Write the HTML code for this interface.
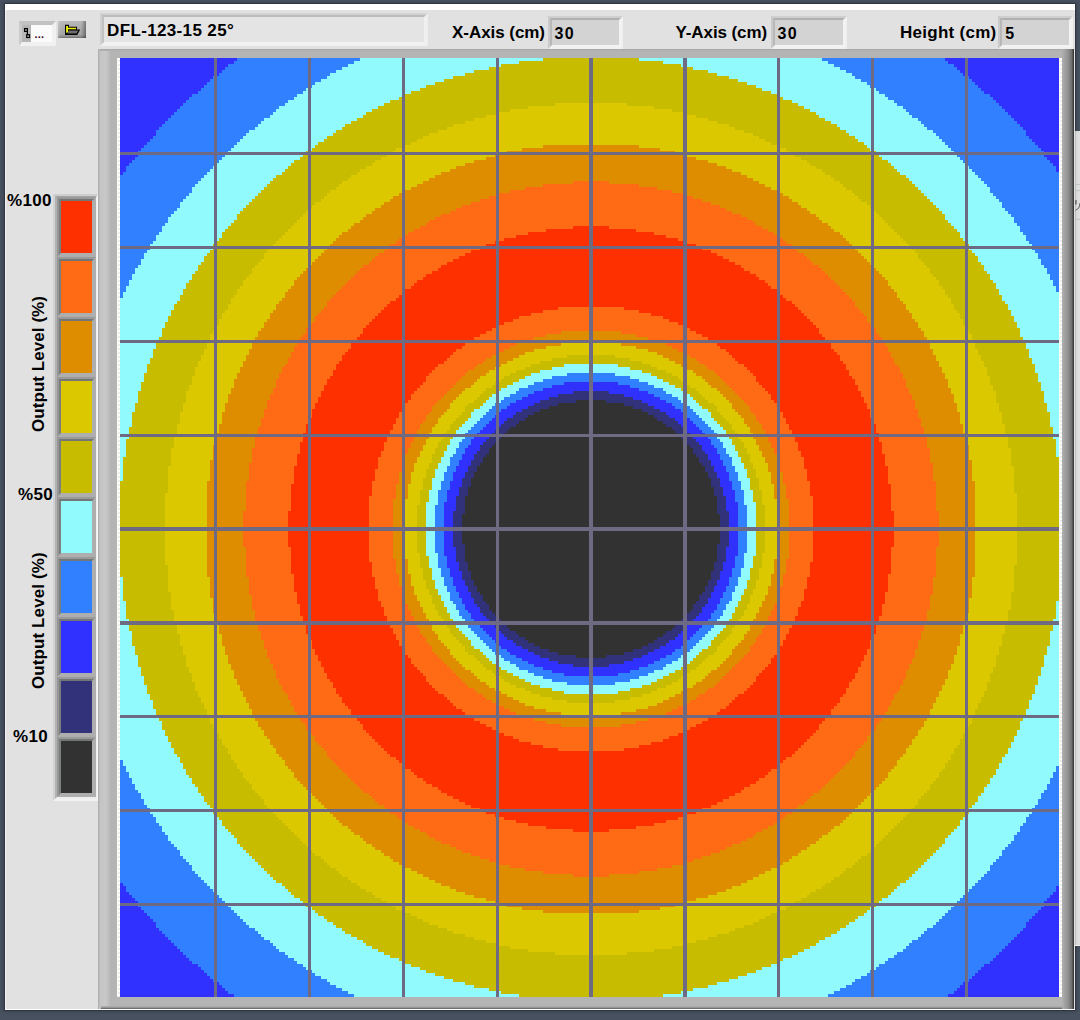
<!DOCTYPE html>
<html><head><meta charset="utf-8"><title>Output Level</title>
<style>
html,body{margin:0;padding:0}
body{width:1080px;height:1020px;overflow:hidden;background:#47515f;position:relative;
 font-family:"Liberation Sans",sans-serif;font-weight:bold;font-size:17px;color:#000}
.abs{position:absolute}
#win{position:absolute;left:5px;top:4px;width:1070px;height:1006px;background:#e1e1e1;box-shadow:0 0 0 .7px #2c323c,0 0 3px 1px rgba(30,36,46,.5)}
#lftw{position:absolute;left:0;top:6px;width:1px;height:1000px;background:#f2f2f2}
#topw{position:absolute;left:0;top:0;width:1070px;height:6px;background:#fff}
#botw{position:absolute;left:0;top:1005px;width:1070px;height:1px;background:#fff}
#rgtw{position:absolute;left:1069px;top:45px;width:1px;height:961px;background:#fff}
#side{position:absolute;left:1075px;top:130.6px;width:5px;height:815.4px;background:linear-gradient(90deg,#9a9a9a 0,#d4d4d4 0.8px,#dadada 2px,#e0e0e0 5px);box-shadow:inset 0 -1px 0 #efefef}
.t{position:absolute;white-space:nowrap;line-height:20px;height:20px}
.v{font-size:16px;letter-spacing:1.4px}
/* sunken boxes */
.sunk{position:absolute;box-sizing:border-box;border-style:solid;border-width:2px;
 border-color:#d0d0d0 #f0f0f0 #f0f0f0 #cccccc}
.sunk:before{content:"";position:absolute;left:0;top:0;right:0;bottom:0;border-style:solid;border-width:2px;border-color:inherit}
#name{left:100px;top:13px;width:328px;height:33px;background:#e4e4e4;border-color:#d2d2d2 #eeeeee #f0f0f0 #d0d0d0}
#name:before{border-color:#bcbcbc #f0f0f0 #f2f2f2 #c2c2c2}
.num{top:16px;height:32.5px;background:#d3d3d3;border-color:#cfcfcf #f0f0f0 #f0f0f0 #cacaca}
.num:before{border-color:#b0b0b0 #f3f3f3 #f3f3f3 #b8b8b8}
/* path control */
#pc{position:absolute;left:19px;top:21px;width:37px;height:25px;box-sizing:border-box;border-style:solid;border-width:4px 4px 4px 3px;border-color:#c2c2c2 #f1f1f1 #f1f1f1 #cacaca;background:#fbfbfb}
#pc .g{position:absolute;left:0;top:0;width:9px;height:17px;background:#b6b6b6}
#pcd{position:absolute;left:34.4px;top:28px;font-size:11px;line-height:12px;color:#3a0018;letter-spacing:0.25px}
#fb{position:absolute;left:58px;top:21px;width:28px;height:17px;background:linear-gradient(180deg,#b9b9b9 0,#a9a9a9 55%,#a2a2a2 80%,#8a8a8a 92%,#6c6c6c 100%)}
#fb:before{content:"";position:absolute;left:0;top:0;width:100%;height:100%;background:linear-gradient(90deg,rgba(255,255,255,.18) 0,rgba(255,255,255,0) 4px,rgba(0,0,0,0) 23px,rgba(0,0,0,.28) 27px,rgba(0,0,0,.38) 28px)}
.ic{position:absolute;left:0;top:0;display:block}
/* plot frame */
#frame{position:absolute;left:98px;top:49px;width:976px;height:960px;background:#b4b4b4}
#frame .l{position:absolute;left:0;top:0;width:13px;height:960px;background:linear-gradient(90deg,#a8a8a8 0,#c4c4c4 2px,#c8c8c8 8px,#b4b4b4 13px)}
#frame .r{position:absolute;left:964px;top:0;width:12px;height:960px;z-index:1;background:linear-gradient(90deg,#b0b0b0 0,#929292 6px,#6c6c6c 10px,#3e3e3e 11.2px,#3a3a3a 12px)}
#frame .tp{position:absolute;left:2px;top:0;width:962px;height:2px;background:linear-gradient(180deg,#a6a6a6,#b4b4b4)}
#frame .bt{position:absolute;left:3px;top:957px;width:961px;height:3px;background:linear-gradient(180deg,#b4b4b4 0,#909090 60%,#585858 100%)}
#plotbg{position:absolute;left:117px;top:58px;width:945px;height:939px;background:#fbfbf2}
#plotbg:before,#plotbg:after{content:"";position:absolute;top:0;width:2px;height:939px;background:repeating-linear-gradient(180deg,#fff 0,#fff 2px,#ececec 2px,#ececec 4px)}
#plotbg:before{left:0.5px}
#plotbg:after{left:943.2px}
.heat,.grid{position:absolute;left:120px;top:58px;display:block}
/* legend */
#lgf{position:absolute;left:53px;top:194px;width:45px;height:607px;box-sizing:border-box;background:#acacac;border-style:solid;border-width:2px 1px 2px 2px;border-color:#cecece #f4f4f4 #f2f2f2 #d2d2d2}
#lgf:before{content:"";position:absolute;left:0;top:0;right:0;bottom:0;border-style:solid;border-width:1px 1px 2px 2px;border-color:#a6a6a6 #f0f0f0 #eeeeee #b2b2b2}
.lg{position:absolute;left:57px;width:39px;height:60px;box-sizing:border-box;border-style:solid;border-width:2px;border-color:#9a9a9a #aeaeae #aeaeae #969696}
.lg i{position:absolute;left:0;top:0;right:0;bottom:0;display:block;border-style:solid;border-width:2px;border-color:#727676 #aeaeae #aeaeae #7a7e7e}
.rot{position:absolute;white-space:nowrap;transform-origin:0 0;transform:rotate(-90deg);line-height:20px;height:20px}
</style></head><body>
<div id="win">
<div id="topw"></div><div id="lftw"></div>
</div>
<div id="botw" class="abs" style="left:5px;top:1009px"></div>
<div id="side"></div>
<svg class="abs" style="left:1075px;top:131px" width="5" height="815" viewBox="0 0 5 815"><g stroke="#b4baba" stroke-width=".8"><path d="M0 53.4h5M0 59.6h5M0 88.4h5"/></g><path d="M.9 69v4.6" stroke="#4c4c4c" stroke-width="1.2" fill="none"/><path d="M4.9 72.2c0 4-1.6 6-4.3 7" stroke="#555" stroke-width="1" fill="none"/></svg>

<!-- path control + browse button -->
<div id="pc"><div class="g"></div></div>
<svg class="ic" width="60" height="50" viewBox="0 0 60 50"><g fill="none" stroke="#000" stroke-width="1.25"><rect x="24.6" y="28.6" width="2.8" height="2.8"/><rect x="26.7" y="34.7" width="2.8" height="2.8"/><path d="M27.4 31.4V34.7"/></g></svg>
<div id="pcd">...</div>
<div id="fb"></div>
<svg class="ic" width="90" height="50" viewBox="0 0 90 50"><path d="M65 24.8h4v2h8v2.6h3.2l-3 5.5H65z" fill="#000"/><path d="M66.1 26h1.9v1.8h8v1.4h-8v2.4l-.6 1.2h-1.3z" fill="#f4f400"/><path d="M68.6 30.4h9.7l-1.8 3.2h-9.4z" fill="#6e6e6e"/></svg>
<!-- top controls -->
<div class="sunk" id="name"></div>
<div class="t" id="tname" style="left:107px;top:21px;letter-spacing:0.36px">DFL-123-15 25°</div>

<div class="t" id="lx" style="left:452px;top:23px;letter-spacing:-0.05px">X-Axis (cm)</div>
<div class="sunk num" style="left:548px;width:75px"></div>
<div class="t v" id="vx" style="left:554.5px;top:24px">30</div>

<div class="t" id="ly" style="left:675.5px;top:23px;letter-spacing:-0.1px">Y-Axis (cm)</div>
<div class="sunk num" style="left:771px;width:75.5px"></div>
<div class="t v" id="vy" style="left:777.5px;top:24px">30</div>

<div class="t" id="lh" style="left:900px;top:23px;letter-spacing:0.27px">Height (cm)</div>
<div class="sunk num" style="left:998px;width:75px"></div>
<div class="t v" id="vh" style="left:1005.3px;top:24px">5</div>

<!-- plot -->
<div id="frame"><div class="l"></div><div class="r"></div><div class="tp"></div><div class="bt"></div></div>
<div id="plotbg"></div>
<svg class="heat" width="939" height="939" viewBox="0 0 313 313" shape-rendering="crispEdges">
<rect width="313" height="313" fill="#3030ff"/>
<path fill="#3080ff" d="M39 0h236v1h-236zM38 1h238v1h-238zM36 2h242v1h-242zM35 3h244v1h-244zM34 4h246v1h-246zM33 5h248v1h-248zM31 6h252v1h-252zM30 7h254v1h-254zM29 8h256v1h-256zM28 9h258v1h-258zM27 10h260v1h-260zM26 11h262v1h-262zM24 12h266v1h-266zM23 13h268v1h-268zM22 14h270v1h-270zM21 15h272v1h-272zM20 16h274v1h-274zM19 17h276v1h-276zM18 18h278v1h-278zM17 19h280v1h-280zM16 20h282v1h-282zM15 21h284v1h-284zM14 22h286v1h-286zM13 23h288v1h-288zM12 24h290v2h-290zM11 26h292v1h-292zM10 27h294v1h-294zM9 28h296v1h-296zM8 29h298v1h-298zM7 30h300v1h-300zM6 31h302v2h-302zM5 33h304v1h-304zM4 34h306v1h-306zM3 35h308v1h-308zM2 36h310v2h-310zM1 38h312v1h-312zM0 39h313v236h-313zM1 275h312v1h-312zM2 276h310v2h-310zM3 278h308v1h-308zM4 279h306v1h-306zM5 280h304v1h-304zM6 281h302v2h-302zM7 283h300v1h-300zM8 284h298v1h-298zM9 285h296v1h-296zM10 286h294v1h-294zM11 287h292v1h-292zM12 288h290v2h-290zM13 290h288v1h-288zM14 291h286v1h-286zM15 292h284v1h-284zM16 293h282v1h-282zM17 294h280v1h-280zM18 295h278v1h-278zM19 296h276v1h-276zM20 297h274v1h-274zM21 298h272v1h-272zM22 299h270v1h-270zM23 300h268v1h-268zM24 301h266v1h-266zM26 302h262v1h-262zM27 303h260v1h-260zM28 304h258v1h-258zM29 305h256v1h-256zM30 306h254v1h-254zM31 307h252v1h-252zM33 308h248v1h-248zM34 309h246v1h-246zM35 310h244v1h-244zM36 311h242v1h-242zM38 312h238v1h-238z"/>
<path fill="#90fafc" d="M80 0h154v1h-154zM78 1h158v1h-158zM76 2h162v1h-162zM74 3h166v1h-166zM72 4h170v1h-170zM70 5h174v1h-174zM69 6h176v1h-176zM67 7h180v1h-180zM65 8h184v1h-184zM64 9h186v1h-186zM62 10h190v1h-190zM61 11h192v1h-192zM59 12h196v1h-196zM58 13h198v1h-198zM56 14h202v1h-202zM55 15h204v1h-204zM53 16h208v1h-208zM52 17h210v1h-210zM51 18h212v1h-212zM50 19h214v1h-214zM48 20h218v1h-218zM47 21h220v1h-220zM46 22h222v1h-222zM45 23h224v1h-224zM43 24h228v1h-228zM42 25h230v1h-230zM41 26h232v1h-232zM40 27h234v1h-234zM39 28h236v1h-236zM38 29h238v1h-238zM37 30h240v1h-240zM36 31h242v1h-242zM35 32h244v1h-244zM34 33h246v1h-246zM33 34h248v1h-248zM32 35h250v1h-250zM31 36h252v1h-252zM30 37h254v1h-254zM29 38h256v1h-256zM28 39h258v1h-258zM27 40h260v1h-260zM26 41h262v1h-262zM25 42h264v1h-264zM24 43h266v2h-266zM23 45h268v1h-268zM22 46h270v1h-270zM21 47h272v1h-272zM20 48h274v2h-274zM19 50h276v1h-276zM18 51h278v1h-278zM17 52h280v1h-280zM16 53h282v2h-282zM15 55h284v1h-284zM14 56h286v2h-286zM13 58h288v1h-288zM12 59h290v2h-290zM11 61h292v1h-292zM10 62h294v2h-294zM9 64h296v1h-296zM8 65h298v2h-298zM7 67h300v2h-300zM6 69h302v1h-302zM5 70h304v2h-304zM4 72h306v2h-306zM3 74h308v2h-308zM2 76h310v2h-310zM1 78h312v2h-312zM0 80h313v154h-313zM1 234h312v2h-312zM2 236h310v2h-310zM3 238h308v2h-308zM4 240h306v2h-306zM5 242h304v2h-304zM6 244h302v1h-302zM7 245h300v2h-300zM8 247h298v2h-298zM9 249h296v1h-296zM10 250h294v2h-294zM11 252h292v1h-292zM12 253h290v2h-290zM13 255h288v1h-288zM14 256h286v2h-286zM15 258h284v1h-284zM16 259h282v2h-282zM17 261h280v1h-280zM18 262h278v1h-278zM19 263h276v1h-276zM20 264h274v2h-274zM21 266h272v1h-272zM22 267h270v1h-270zM23 268h268v1h-268zM24 269h266v2h-266zM25 271h264v1h-264zM26 272h262v1h-262zM27 273h260v1h-260zM28 274h258v1h-258zM29 275h256v1h-256zM30 276h254v1h-254zM31 277h252v1h-252zM32 278h250v1h-250zM33 279h248v1h-248zM34 280h246v1h-246zM35 281h244v1h-244zM36 282h242v1h-242zM37 283h240v1h-240zM38 284h238v1h-238zM39 285h236v1h-236zM40 286h234v1h-234zM41 287h232v1h-232zM42 288h230v1h-230zM43 289h228v1h-228zM45 290h224v1h-224zM46 291h222v1h-222zM47 292h220v1h-220zM48 293h218v1h-218zM50 294h214v1h-214zM51 295h212v1h-212zM52 296h210v1h-210zM53 297h208v1h-208zM55 298h204v1h-204zM56 299h202v1h-202zM58 300h198v1h-198zM59 301h196v1h-196zM61 302h192v1h-192zM62 303h190v1h-190zM64 304h186v1h-186zM65 305h184v1h-184zM67 306h180v1h-180zM69 307h176v1h-176zM70 308h174v1h-174zM72 309h170v1h-170zM74 310h166v1h-166zM76 311h162v1h-162zM78 312h158v1h-158z"/>
<path fill="#c8bc00" d="M141 0h32v1h-32zM133 1h48v1h-48zM127 2h60v1h-60zM123 3h68v1h-68zM118 4h78v1h-78zM115 5h84v1h-84zM111 6h92v1h-92zM108 7h98v1h-98zM105 8h104v1h-104zM102 9h110v1h-110zM100 10h114v1h-114zM97 11h120v1h-120zM95 12h124v1h-124zM93 13h128v1h-128zM90 14h134v1h-134zM88 15h138v1h-138zM86 16h142v1h-142zM84 17h146v1h-146zM82 18h150v1h-150zM81 19h152v1h-152zM79 20h156v1h-156zM77 21h160v1h-160zM75 22h164v1h-164zM74 23h166v1h-166zM72 24h170v1h-170zM71 25h172v1h-172zM69 26h176v1h-176zM68 27h178v1h-178zM66 28h182v1h-182zM65 29h184v1h-184zM64 30h186v1h-186zM62 31h190v1h-190zM61 32h192v1h-192zM60 33h194v1h-194zM58 34h198v1h-198zM57 35h200v1h-200zM56 36h202v1h-202zM55 37h204v1h-204zM54 38h206v1h-206zM52 39h210v1h-210zM51 40h212v1h-212zM50 41h214v1h-214zM49 42h216v1h-216zM48 43h218v1h-218zM47 44h220v1h-220zM46 45h222v1h-222zM45 46h224v1h-224zM44 47h226v1h-226zM43 48h228v1h-228zM42 49h230v1h-230zM41 50h232v1h-232zM40 51h234v1h-234zM39 52h236v2h-236zM38 54h238v1h-238zM37 55h240v1h-240zM36 56h242v1h-242zM35 57h244v1h-244zM34 58h246v2h-246zM33 60h248v1h-248zM32 61h250v1h-250zM31 62h252v2h-252zM30 64h254v1h-254zM29 65h256v1h-256zM28 66h258v2h-258zM27 68h260v1h-260zM26 69h262v2h-262zM25 71h264v1h-264zM24 72h266v2h-266zM23 74h268v1h-268zM22 75h270v2h-270zM21 77h272v2h-272zM20 79h274v2h-274zM19 81h276v1h-276zM18 82h278v2h-278zM17 84h280v2h-280zM16 86h282v2h-282zM15 88h284v2h-284zM14 90h286v3h-286zM13 93h288v2h-288zM12 95h290v2h-290zM11 97h292v3h-292zM10 100h294v2h-294zM9 102h296v3h-296zM8 105h298v3h-298zM7 108h300v3h-300zM6 111h302v4h-302zM5 115h304v3h-304zM4 118h306v5h-306zM3 123h308v4h-308zM2 127h310v6h-310zM1 133h312v8h-312zM0 141h313v32h-313zM1 173h312v8h-312zM2 181h310v6h-310zM3 187h308v4h-308zM4 191h306v5h-306zM5 196h304v3h-304zM6 199h302v4h-302zM7 203h300v3h-300zM8 206h298v3h-298zM9 209h296v3h-296zM10 212h294v2h-294zM11 214h292v3h-292zM12 217h290v2h-290zM13 219h288v2h-288zM14 221h286v3h-286zM15 224h284v2h-284zM16 226h282v2h-282zM17 228h280v2h-280zM18 230h278v2h-278zM19 232h276v1h-276zM20 233h274v2h-274zM21 235h272v2h-272zM22 237h270v2h-270zM23 239h268v1h-268zM24 240h266v2h-266zM25 242h264v1h-264zM26 243h262v2h-262zM27 245h260v1h-260zM28 246h258v2h-258zM29 248h256v1h-256zM30 249h254v1h-254zM31 250h252v2h-252zM32 252h250v1h-250zM33 253h248v1h-248zM34 254h246v2h-246zM35 256h244v1h-244zM36 257h242v1h-242zM37 258h240v1h-240zM38 259h238v1h-238zM39 260h236v2h-236zM40 262h234v1h-234zM41 263h232v1h-232zM42 264h230v1h-230zM43 265h228v1h-228zM44 266h226v1h-226zM45 267h224v1h-224zM46 268h222v1h-222zM47 269h220v1h-220zM48 270h218v1h-218zM49 271h216v1h-216zM50 272h214v1h-214zM51 273h212v1h-212zM52 274h210v1h-210zM54 275h206v1h-206zM55 276h204v1h-204zM56 277h202v1h-202zM57 278h200v1h-200zM58 279h198v1h-198zM60 280h194v1h-194zM61 281h192v1h-192zM62 282h190v1h-190zM64 283h186v1h-186zM65 284h184v1h-184zM66 285h182v1h-182zM68 286h178v1h-178zM69 287h176v1h-176zM71 288h172v1h-172zM72 289h170v1h-170zM74 290h166v1h-166zM75 291h164v1h-164zM77 292h160v1h-160zM79 293h156v1h-156zM81 294h152v1h-152zM82 295h150v1h-150zM84 296h146v1h-146zM86 297h142v1h-142zM88 298h138v1h-138zM90 299h134v1h-134zM93 300h128v1h-128zM95 301h124v1h-124zM97 302h120v1h-120zM100 303h114v1h-114zM102 304h110v1h-110zM105 305h104v1h-104zM108 306h98v1h-98zM111 307h92v1h-92zM115 308h84v1h-84zM118 309h78v1h-78zM123 310h68v1h-68zM127 311h60v1h-60zM133 312h48v1h-48z"/>
<path fill="#dcc800" d="M145 15h24v1h-24zM136 16h42v1h-42zM130 17h54v1h-54zM126 18h62v1h-62zM122 19h70v1h-70zM118 20h78v1h-78zM115 21h84v1h-84zM111 22h92v1h-92zM109 23h96v1h-96zM106 24h102v1h-102zM103 25h108v1h-108zM101 26h112v1h-112zM99 27h116v1h-116zM97 28h120v1h-120zM94 29h126v1h-126zM92 30h130v1h-130zM91 31h132v1h-132zM89 32h136v1h-136zM87 33h140v1h-140zM85 34h144v1h-144zM84 35h146v1h-146zM82 36h150v1h-150zM80 37h154v1h-154zM79 38h156v1h-156zM77 39h160v1h-160zM76 40h162v1h-162zM74 41h166v1h-166zM73 42h168v1h-168zM72 43h170v1h-170zM70 44h174v1h-174zM69 45h176v1h-176zM68 46h178v1h-178zM67 47h180v1h-180zM65 48h184v1h-184zM64 49h186v1h-186zM63 50h188v1h-188zM62 51h190v1h-190zM61 52h192v1h-192zM60 53h194v1h-194zM59 54h196v1h-196zM58 55h198v1h-198zM57 56h200v1h-200zM56 57h202v1h-202zM55 58h204v1h-204zM54 59h206v1h-206zM53 60h208v1h-208zM52 61h210v1h-210zM51 62h212v1h-212zM50 63h214v1h-214zM49 64h216v1h-216zM48 65h218v2h-218zM47 67h220v1h-220zM46 68h222v1h-222zM45 69h224v1h-224zM44 70h226v2h-226zM43 72h228v1h-228zM42 73h230v1h-230zM41 74h232v2h-232zM40 76h234v1h-234zM39 77h236v2h-236zM38 79h238v1h-238zM37 80h240v2h-240zM36 82h242v2h-242zM35 84h244v1h-244zM34 85h246v2h-246zM33 87h248v2h-248zM32 89h250v2h-250zM31 91h252v1h-252zM30 92h254v2h-254zM29 94h256v3h-256zM28 97h258v2h-258zM27 99h260v2h-260zM26 101h262v2h-262zM25 103h264v3h-264zM24 106h266v3h-266zM23 109h268v2h-268zM22 111h270v4h-270zM21 115h272v3h-272zM20 118h274v4h-274zM19 122h276v4h-276zM18 126h278v4h-278zM17 130h280v6h-280zM16 136h282v9h-282zM15 145h284v24h-284zM16 169h282v9h-282zM17 178h280v6h-280zM18 184h278v4h-278zM19 188h276v4h-276zM20 192h274v4h-274zM21 196h272v3h-272zM22 199h270v4h-270zM23 203h268v2h-268zM24 205h266v3h-266zM25 208h264v3h-264zM26 211h262v2h-262zM27 213h260v2h-260zM28 215h258v2h-258zM29 217h256v3h-256zM30 220h254v2h-254zM31 222h252v1h-252zM32 223h250v2h-250zM33 225h248v2h-248zM34 227h246v2h-246zM35 229h244v1h-244zM36 230h242v2h-242zM37 232h240v2h-240zM38 234h238v1h-238zM39 235h236v2h-236zM40 237h234v1h-234zM41 238h232v2h-232zM42 240h230v1h-230zM43 241h228v1h-228zM44 242h226v2h-226zM45 244h224v1h-224zM46 245h222v1h-222zM47 246h220v1h-220zM48 247h218v2h-218zM49 249h216v1h-216zM50 250h214v1h-214zM51 251h212v1h-212zM52 252h210v1h-210zM53 253h208v1h-208zM54 254h206v1h-206zM55 255h204v1h-204zM56 256h202v1h-202zM57 257h200v1h-200zM58 258h198v1h-198zM59 259h196v1h-196zM60 260h194v1h-194zM61 261h192v1h-192zM62 262h190v1h-190zM63 263h188v1h-188zM64 264h186v1h-186zM65 265h184v1h-184zM67 266h180v1h-180zM68 267h178v1h-178zM69 268h176v1h-176zM70 269h174v1h-174zM72 270h170v1h-170zM73 271h168v1h-168zM74 272h166v1h-166zM76 273h162v1h-162zM77 274h160v1h-160zM79 275h156v1h-156zM80 276h154v1h-154zM82 277h150v1h-150zM84 278h146v1h-146zM85 279h144v1h-144zM87 280h140v1h-140zM89 281h136v1h-136zM91 282h132v1h-132zM92 283h130v1h-130zM94 284h126v1h-126zM97 285h120v1h-120zM99 286h116v1h-116zM101 287h112v1h-112zM103 288h108v1h-108zM106 289h102v1h-102zM109 290h96v1h-96zM111 291h92v1h-92zM115 292h84v1h-84zM118 293h78v1h-78zM122 294h70v1h-70zM126 295h62v1h-62zM130 296h54v1h-54zM136 297h42v1h-42zM145 298h24v1h-24z"/>
<path fill="#de8c00" d="M141 29h32v1h-32zM134 30h46v1h-46zM129 31h56v1h-56zM125 32h64v1h-64zM122 33h70v1h-70zM118 34h78v1h-78zM115 35h84v1h-84zM112 36h90v1h-90zM110 37h94v1h-94zM107 38h100v1h-100zM105 39h104v1h-104zM103 40h108v1h-108zM101 41h112v1h-112zM99 42h116v1h-116zM97 43h120v1h-120zM95 44h124v1h-124zM93 45h128v1h-128zM91 46h132v1h-132zM90 47h134v1h-134zM88 48h138v1h-138zM87 49h140v1h-140zM85 50h144v1h-144zM84 51h146v1h-146zM82 52h150v1h-150zM81 53h152v1h-152zM80 54h154v1h-154zM78 55h158v1h-158zM77 56h160v1h-160zM76 57h162v1h-162zM74 58h166v1h-166zM73 59h168v1h-168zM72 60h170v1h-170zM71 61h172v1h-172zM70 62h174v1h-174zM69 63h176v1h-176zM68 64h178v1h-178zM67 65h180v1h-180zM66 66h182v1h-182zM65 67h184v1h-184zM64 68h186v1h-186zM63 69h188v1h-188zM62 70h190v1h-190zM61 71h192v1h-192zM60 72h194v1h-194zM59 73h196v1h-196zM58 74h198v2h-198zM57 76h200v1h-200zM56 77h202v1h-202zM55 78h204v2h-204zM54 80h206v1h-206zM53 81h208v1h-208zM52 82h210v2h-210zM51 84h212v1h-212zM50 85h214v2h-214zM49 87h216v1h-216zM48 88h218v2h-218zM47 90h220v1h-220zM46 91h222v2h-222zM45 93h224v2h-224zM44 95h226v2h-226zM43 97h228v2h-228zM42 99h230v2h-230zM41 101h232v2h-232zM40 103h234v2h-234zM39 105h236v2h-236zM38 107h238v3h-238zM37 110h240v2h-240zM36 112h242v3h-242zM35 115h244v3h-244zM34 118h246v4h-246zM33 122h248v3h-248zM32 125h250v4h-250zM31 129h252v5h-252zM30 134h254v7h-254zM29 141h256v32h-256zM30 173h254v7h-254zM31 180h252v5h-252zM32 185h250v4h-250zM33 189h248v3h-248zM34 192h246v4h-246zM35 196h244v3h-244zM36 199h242v3h-242zM37 202h240v2h-240zM38 204h238v3h-238zM39 207h236v2h-236zM40 209h234v2h-234zM41 211h232v2h-232zM42 213h230v2h-230zM43 215h228v2h-228zM44 217h226v2h-226zM45 219h224v2h-224zM46 221h222v2h-222zM47 223h220v1h-220zM48 224h218v2h-218zM49 226h216v1h-216zM50 227h214v2h-214zM51 229h212v1h-212zM52 230h210v2h-210zM53 232h208v1h-208zM54 233h206v1h-206zM55 234h204v2h-204zM56 236h202v1h-202zM57 237h200v1h-200zM58 238h198v2h-198zM59 240h196v1h-196zM60 241h194v1h-194zM61 242h192v1h-192zM62 243h190v1h-190zM63 244h188v1h-188zM64 245h186v1h-186zM65 246h184v1h-184zM66 247h182v1h-182zM67 248h180v1h-180zM68 249h178v1h-178zM69 250h176v1h-176zM70 251h174v1h-174zM71 252h172v1h-172zM72 253h170v1h-170zM73 254h168v1h-168zM74 255h166v1h-166zM76 256h162v1h-162zM77 257h160v1h-160zM78 258h158v1h-158zM80 259h154v1h-154zM81 260h152v1h-152zM82 261h150v1h-150zM84 262h146v1h-146zM85 263h144v1h-144zM87 264h140v1h-140zM88 265h138v1h-138zM90 266h134v1h-134zM91 267h132v1h-132zM93 268h128v1h-128zM95 269h124v1h-124zM97 270h120v1h-120zM99 271h116v1h-116zM101 272h112v1h-112zM103 273h108v1h-108zM105 274h104v1h-104zM107 275h100v1h-100zM110 276h94v1h-94zM112 277h90v1h-90zM115 278h84v1h-84zM118 279h78v1h-78zM122 280h70v1h-70zM125 281h64v1h-64zM129 282h56v1h-56zM134 283h46v1h-46zM141 284h32v1h-32z"/>
<path fill="#ff6a14" d="M151 41h12v1h-12zM141 42h32v1h-32zM135 43h44v1h-44zM130 44h54v1h-54zM126 45h62v1h-62zM123 46h68v1h-68zM120 47h74v1h-74zM117 48h80v1h-80zM114 49h86v1h-86zM112 50h90v1h-90zM110 51h94v1h-94zM107 52h100v1h-100zM105 53h104v1h-104zM103 54h108v1h-108zM102 55h110v1h-110zM100 56h114v1h-114zM98 57h118v1h-118zM96 58h122v1h-122zM95 59h124v1h-124zM93 60h128v1h-128zM92 61h130v1h-130zM90 62h134v1h-134zM89 63h136v1h-136zM88 64h138v1h-138zM86 65h142v1h-142zM85 66h144v1h-144zM84 67h146v1h-146zM83 68h148v1h-148zM81 69h152v1h-152zM80 70h154v1h-154zM79 71h156v1h-156zM78 72h158v1h-158zM77 73h160v1h-160zM76 74h162v1h-162zM75 75h164v1h-164zM74 76h166v1h-166zM73 77h168v1h-168zM72 78h170v1h-170zM71 79h172v1h-172zM70 80h174v1h-174zM69 81h176v2h-176zM68 83h178v1h-178zM67 84h180v1h-180zM66 85h182v1h-182zM65 86h184v2h-184zM64 88h186v1h-186zM63 89h188v1h-188zM62 90h190v2h-190zM61 92h192v1h-192zM60 93h194v2h-194zM59 95h196v1h-196zM58 96h198v2h-198zM57 98h200v2h-200zM56 100h202v2h-202zM55 102h204v1h-204zM54 103h206v2h-206zM53 105h208v2h-208zM52 107h210v3h-210zM51 110h212v2h-212zM50 112h214v2h-214zM49 114h216v3h-216zM48 117h218v3h-218zM47 120h220v3h-220zM46 123h222v3h-222zM45 126h224v4h-224zM44 130h226v5h-226zM43 135h228v6h-228zM42 141h230v10h-230zM41 151h232v12h-232zM42 163h230v10h-230zM43 173h228v6h-228zM44 179h226v5h-226zM45 184h224v4h-224zM46 188h222v3h-222zM47 191h220v3h-220zM48 194h218v3h-218zM49 197h216v3h-216zM50 200h214v2h-214zM51 202h212v2h-212zM52 204h210v3h-210zM53 207h208v2h-208zM54 209h206v2h-206zM55 211h204v1h-204zM56 212h202v2h-202zM57 214h200v2h-200zM58 216h198v2h-198zM59 218h196v1h-196zM60 219h194v2h-194zM61 221h192v1h-192zM62 222h190v2h-190zM63 224h188v1h-188zM64 225h186v1h-186zM65 226h184v2h-184zM66 228h182v1h-182zM67 229h180v1h-180zM68 230h178v1h-178zM69 231h176v2h-176zM70 233h174v1h-174zM71 234h172v1h-172zM72 235h170v1h-170zM73 236h168v1h-168zM74 237h166v1h-166zM75 238h164v1h-164zM76 239h162v1h-162zM77 240h160v1h-160zM78 241h158v1h-158zM79 242h156v1h-156zM80 243h154v1h-154zM81 244h152v1h-152zM83 245h148v1h-148zM84 246h146v1h-146zM85 247h144v1h-144zM86 248h142v1h-142zM88 249h138v1h-138zM89 250h136v1h-136zM90 251h134v1h-134zM92 252h130v1h-130zM93 253h128v1h-128zM95 254h124v1h-124zM96 255h122v1h-122zM98 256h118v1h-118zM100 257h114v1h-114zM102 258h110v1h-110zM103 259h108v1h-108zM105 260h104v1h-104zM107 261h100v1h-100zM110 262h94v1h-94zM112 263h90v1h-90zM114 264h86v1h-86zM117 265h80v1h-80zM120 266h74v1h-74zM123 267h68v1h-68zM126 268h62v1h-62zM130 269h54v1h-54zM135 270h44v1h-44zM141 271h32v1h-32zM151 272h12v1h-12z"/>
<path fill="#ff3000" d="M151 56h12v1h-12zM142 57h30v1h-30zM136 58h42v1h-42zM132 59h50v1h-50zM128 60h58v1h-58zM125 61h64v1h-64zM122 62h70v1h-70zM120 63h74v1h-74zM117 64h80v1h-80zM115 65h84v1h-84zM113 66h88v1h-88zM111 67h92v1h-92zM109 68h96v1h-96zM107 69h100v1h-100zM106 70h102v1h-102zM104 71h106v1h-106zM102 72h110v1h-110zM101 73h112v1h-112zM99 74h116v1h-116zM98 75h118v1h-118zM97 76h120v1h-120zM95 77h124v1h-124zM94 78h126v1h-126zM93 79h128v1h-128zM92 80h130v1h-130zM90 81h134v1h-134zM89 82h136v1h-136zM88 83h138v1h-138zM87 84h140v1h-140zM86 85h142v1h-142zM85 86h144v1h-144zM84 87h146v1h-146zM83 88h148v1h-148zM82 89h150v1h-150zM81 90h152v2h-152zM80 92h154v1h-154zM79 93h156v1h-156zM78 94h158v1h-158zM77 95h160v2h-160zM76 97h162v1h-162zM75 98h164v1h-164zM74 99h166v2h-166zM73 101h168v1h-168zM72 102h170v2h-170zM71 104h172v2h-172zM70 106h174v1h-174zM69 107h176v2h-176zM68 109h178v2h-178zM67 111h180v2h-180zM66 113h182v2h-182zM65 115h184v2h-184zM64 117h186v3h-186zM63 120h188v2h-188zM62 122h190v3h-190zM61 125h192v3h-192zM60 128h194v4h-194zM59 132h196v4h-196zM58 136h198v6h-198zM57 142h200v9h-200zM56 151h202v12h-202zM57 163h200v9h-200zM58 172h198v6h-198zM59 178h196v4h-196zM60 182h194v4h-194zM61 186h192v3h-192zM62 189h190v3h-190zM63 192h188v2h-188zM64 194h186v3h-186zM65 197h184v2h-184zM66 199h182v2h-182zM67 201h180v2h-180zM68 203h178v2h-178zM69 205h176v2h-176zM70 207h174v1h-174zM71 208h172v2h-172zM72 210h170v2h-170zM73 212h168v1h-168zM74 213h166v2h-166zM75 215h164v1h-164zM76 216h162v1h-162zM77 217h160v2h-160zM78 219h158v1h-158zM79 220h156v1h-156zM80 221h154v1h-154zM81 222h152v2h-152zM82 224h150v1h-150zM83 225h148v1h-148zM84 226h146v1h-146zM85 227h144v1h-144zM86 228h142v1h-142zM87 229h140v1h-140zM88 230h138v1h-138zM89 231h136v1h-136zM90 232h134v1h-134zM92 233h130v1h-130zM93 234h128v1h-128zM94 235h126v1h-126zM95 236h124v1h-124zM97 237h120v1h-120zM98 238h118v1h-118zM99 239h116v1h-116zM101 240h112v1h-112zM102 241h110v1h-110zM104 242h106v1h-106zM106 243h102v1h-102zM107 244h100v1h-100zM109 245h96v1h-96zM111 246h92v1h-92zM113 247h88v1h-88zM115 248h84v1h-84zM117 249h80v1h-80zM120 250h74v1h-74zM122 251h70v1h-70zM125 252h64v1h-64zM128 253h58v1h-58zM132 254h50v1h-50zM136 255h42v1h-42zM142 256h30v1h-30zM151 257h12v1h-12z"/>
<path fill="#ff6a14" d="M146 83h22v1h-22zM141 84h32v1h-32zM137 85h40v1h-40zM133 86h48v1h-48zM131 87h52v1h-52zM128 88h58v1h-58zM126 89h62v1h-62zM124 90h66v1h-66zM122 91h70v1h-70zM120 92h74v1h-74zM118 93h78v1h-78zM117 94h80v1h-80zM115 95h84v1h-84zM114 96h86v1h-86zM112 97h90v1h-90zM111 98h92v1h-92zM110 99h94v1h-94zM109 100h96v1h-96zM108 101h98v1h-98zM106 102h102v1h-102zM105 103h104v1h-104zM104 104h106v1h-106zM103 105h108v1h-108zM102 106h110v2h-110zM101 108h112v1h-112zM100 109h114v1h-114zM99 110h116v1h-116zM98 111h118v1h-118zM97 112h120v2h-120zM96 114h122v1h-122zM95 115h124v2h-124zM94 117h126v1h-126zM93 118h128v2h-128zM92 120h130v2h-130zM91 122h132v2h-132zM90 124h134v2h-134zM89 126h136v2h-136zM88 128h138v3h-138zM87 131h140v2h-140zM86 133h142v4h-142zM85 137h144v4h-144zM84 141h146v5h-146zM83 146h148v22h-148zM84 168h146v5h-146zM85 173h144v4h-144zM86 177h142v4h-142zM87 181h140v2h-140zM88 183h138v3h-138zM89 186h136v2h-136zM90 188h134v2h-134zM91 190h132v2h-132zM92 192h130v2h-130zM93 194h128v2h-128zM94 196h126v1h-126zM95 197h124v2h-124zM96 199h122v1h-122zM97 200h120v2h-120zM98 202h118v1h-118zM99 203h116v1h-116zM100 204h114v1h-114zM101 205h112v1h-112zM102 206h110v2h-110zM103 208h108v1h-108zM104 209h106v1h-106zM105 210h104v1h-104zM106 211h102v1h-102zM108 212h98v1h-98zM109 213h96v1h-96zM110 214h94v1h-94zM111 215h92v1h-92zM112 216h90v1h-90zM114 217h86v1h-86zM115 218h84v1h-84zM117 219h80v1h-80zM118 220h78v1h-78zM120 221h74v1h-74zM122 222h70v1h-70zM124 223h66v1h-66zM126 224h62v1h-62zM128 225h58v1h-58zM131 226h52v1h-52zM133 227h48v1h-48zM137 228h40v1h-40zM141 229h32v1h-32zM146 230h22v1h-22z"/>
<path fill="#de8c00" d="M147 91h20v1h-20zM142 92h30v1h-30zM138 93h38v1h-38zM135 94h44v1h-44zM132 95h50v1h-50zM130 96h54v1h-54zM128 97h58v1h-58zM126 98h62v1h-62zM124 99h66v1h-66zM122 100h70v1h-70zM121 101h72v1h-72zM119 102h76v1h-76zM118 103h78v1h-78zM116 104h82v1h-82zM115 105h84v1h-84zM114 106h86v1h-86zM113 107h88v1h-88zM112 108h90v1h-90zM111 109h92v1h-92zM110 110h94v1h-94zM109 111h96v1h-96zM108 112h98v1h-98zM107 113h100v1h-100zM106 114h102v1h-102zM105 115h104v1h-104zM104 116h106v2h-106zM103 118h108v1h-108zM102 119h110v2h-110zM101 121h112v1h-112zM100 122h114v2h-114zM99 124h116v2h-116zM98 126h118v2h-118zM97 128h120v2h-120zM96 130h122v2h-122zM95 132h124v3h-124zM94 135h126v3h-126zM93 138h128v4h-128zM92 142h130v5h-130zM91 147h132v20h-132zM92 167h130v5h-130zM93 172h128v4h-128zM94 176h126v3h-126zM95 179h124v3h-124zM96 182h122v2h-122zM97 184h120v2h-120zM98 186h118v2h-118zM99 188h116v2h-116zM100 190h114v2h-114zM101 192h112v1h-112zM102 193h110v2h-110zM103 195h108v1h-108zM104 196h106v2h-106zM105 198h104v1h-104zM106 199h102v1h-102zM107 200h100v1h-100zM108 201h98v1h-98zM109 202h96v1h-96zM110 203h94v1h-94zM111 204h92v1h-92zM112 205h90v1h-90zM113 206h88v1h-88zM114 207h86v1h-86zM115 208h84v1h-84zM116 209h82v1h-82zM118 210h78v1h-78zM119 211h76v1h-76zM121 212h72v1h-72zM122 213h70v1h-70zM124 214h66v1h-66zM126 215h62v1h-62zM128 216h58v1h-58zM130 217h54v1h-54zM132 218h50v1h-50zM135 219h44v1h-44zM138 220h38v1h-38zM142 221h30v1h-30zM147 222h20v1h-20z"/>
<path fill="#dcc800" d="M147 95h20v1h-20zM142 96h30v1h-30zM138 97h38v1h-38zM135 98h44v1h-44zM133 99h48v1h-48zM131 100h52v1h-52zM129 101h56v1h-56zM127 102h60v1h-60zM125 103h64v1h-64zM123 104h68v1h-68zM122 105h70v1h-70zM120 106h74v1h-74zM119 107h76v1h-76zM118 108h78v1h-78zM117 109h80v1h-80zM115 110h84v1h-84zM114 111h86v1h-86zM113 112h88v1h-88zM112 113h90v1h-90zM111 114h92v1h-92zM110 115h94v2h-94zM109 117h96v1h-96zM108 118h98v1h-98zM107 119h100v1h-100zM106 120h102v2h-102zM105 122h104v1h-104zM104 123h106v2h-106zM103 125h108v2h-108zM102 127h110v2h-110zM101 129h112v2h-112zM100 131h114v2h-114zM99 133h116v2h-116zM98 135h118v3h-118zM97 138h120v4h-120zM96 142h122v5h-122zM95 147h124v20h-124zM96 167h122v5h-122zM97 172h120v4h-120zM98 176h118v3h-118zM99 179h116v2h-116zM100 181h114v2h-114zM101 183h112v2h-112zM102 185h110v2h-110zM103 187h108v2h-108zM104 189h106v2h-106zM105 191h104v1h-104zM106 192h102v2h-102zM107 194h100v1h-100zM108 195h98v1h-98zM109 196h96v1h-96zM110 197h94v2h-94zM111 199h92v1h-92zM112 200h90v1h-90zM113 201h88v1h-88zM114 202h86v1h-86zM115 203h84v1h-84zM117 204h80v1h-80zM118 205h78v1h-78zM119 206h76v1h-76zM120 207h74v1h-74zM122 208h70v1h-70zM123 209h68v1h-68zM125 210h64v1h-64zM127 211h60v1h-60zM129 212h56v1h-56zM131 213h52v1h-52zM133 214h48v1h-48zM135 215h44v1h-44zM138 216h38v1h-38zM142 217h30v1h-30zM147 218h20v1h-20z"/>
<path fill="#c8bc00" d="M149 99h16v1h-16zM144 100h26v1h-26zM140 101h34v1h-34zM137 102h40v1h-40zM135 103h44v1h-44zM132 104h50v1h-50zM130 105h54v1h-54zM128 106h58v1h-58zM127 107h60v1h-60zM125 108h64v1h-64zM124 109h66v1h-66zM122 110h70v1h-70zM121 111h72v1h-72zM120 112h74v1h-74zM119 113h76v1h-76zM118 114h78v1h-78zM116 115h82v1h-82zM115 116h84v2h-84zM114 118h86v1h-86zM113 119h88v1h-88zM112 120h90v1h-90zM111 121h92v1h-92zM110 122h94v2h-94zM109 124h96v1h-96zM108 125h98v2h-98zM107 127h100v1h-100zM106 128h102v2h-102zM105 130h104v2h-104zM104 132h106v3h-106zM103 135h108v2h-108zM102 137h110v3h-110zM101 140h112v4h-112zM100 144h114v5h-114zM99 149h116v16h-116zM100 165h114v5h-114zM101 170h112v4h-112zM102 174h110v3h-110zM103 177h108v2h-108zM104 179h106v3h-106zM105 182h104v2h-104zM106 184h102v2h-102zM107 186h100v1h-100zM108 187h98v2h-98zM109 189h96v1h-96zM110 190h94v2h-94zM111 192h92v1h-92zM112 193h90v1h-90zM113 194h88v1h-88zM114 195h86v1h-86zM115 196h84v2h-84zM116 198h82v1h-82zM118 199h78v1h-78zM119 200h76v1h-76zM120 201h74v1h-74zM121 202h72v1h-72zM122 203h70v1h-70zM124 204h66v1h-66zM125 205h64v1h-64zM127 206h60v1h-60zM128 207h58v1h-58zM130 208h54v1h-54zM132 209h50v1h-50zM135 210h44v1h-44zM137 211h40v1h-40zM140 212h34v1h-34zM144 213h26v1h-26zM149 214h16v1h-16z"/>
<path fill="#90fafc" d="M148 102h18v1h-18zM144 103h26v1h-26zM140 104h34v1h-34zM137 105h40v1h-40zM135 106h44v1h-44zM133 107h48v1h-48zM131 108h52v1h-52zM129 109h56v1h-56zM127 110h60v1h-60zM126 111h62v1h-62zM124 112h66v1h-66zM123 113h68v1h-68zM122 114h70v1h-70zM121 115h72v1h-72zM120 116h74v1h-74zM118 117h78v1h-78zM117 118h80v2h-80zM116 120h82v1h-82zM115 121h84v1h-84zM114 122h86v1h-86zM113 123h88v1h-88zM112 124h90v2h-90zM111 126h92v1h-92zM110 127h94v2h-94zM109 129h96v2h-96zM108 131h98v2h-98zM107 133h100v2h-100zM106 135h102v2h-102zM105 137h104v3h-104zM104 140h106v4h-106zM103 144h108v4h-108zM102 148h110v18h-110zM103 166h108v4h-108zM104 170h106v4h-106zM105 174h104v3h-104zM106 177h102v2h-102zM107 179h100v2h-100zM108 181h98v2h-98zM109 183h96v2h-96zM110 185h94v2h-94zM111 187h92v1h-92zM112 188h90v2h-90zM113 190h88v1h-88zM114 191h86v1h-86zM115 192h84v1h-84zM116 193h82v1h-82zM117 194h80v2h-80zM118 196h78v1h-78zM120 197h74v1h-74zM121 198h72v1h-72zM122 199h70v1h-70zM123 200h68v1h-68zM124 201h66v1h-66zM126 202h62v1h-62zM127 203h60v1h-60zM129 204h56v1h-56zM131 205h52v1h-52zM133 206h48v1h-48zM135 207h44v1h-44zM137 208h40v1h-40zM140 209h34v1h-34zM144 210h26v1h-26zM148 211h18v1h-18z"/>
<path fill="#3080ff" d="M149 105h16v1h-16zM144 106h26v1h-26zM141 107h32v1h-32zM138 108h38v1h-38zM136 109h42v1h-42zM133 110h48v1h-48zM132 111h50v1h-50zM130 112h54v1h-54zM128 113h58v1h-58zM127 114h60v1h-60zM125 115h64v1h-64zM124 116h66v1h-66zM123 117h68v1h-68zM122 118h70v1h-70zM121 119h72v1h-72zM120 120h74v1h-74zM119 121h76v1h-76zM118 122h78v1h-78zM117 123h80v1h-80zM116 124h82v1h-82zM115 125h84v2h-84zM114 127h86v1h-86zM113 128h88v2h-88zM112 130h90v2h-90zM111 132h92v1h-92zM110 133h94v3h-94zM109 136h96v2h-96zM108 138h98v3h-98zM107 141h100v3h-100zM106 144h102v5h-102zM105 149h104v16h-104zM106 165h102v5h-102zM107 170h100v3h-100zM108 173h98v3h-98zM109 176h96v2h-96zM110 178h94v3h-94zM111 181h92v1h-92zM112 182h90v2h-90zM113 184h88v2h-88zM114 186h86v1h-86zM115 187h84v2h-84zM116 189h82v1h-82zM117 190h80v1h-80zM118 191h78v1h-78zM119 192h76v1h-76zM120 193h74v1h-74zM121 194h72v1h-72zM122 195h70v1h-70zM123 196h68v1h-68zM124 197h66v1h-66zM125 198h64v1h-64zM127 199h60v1h-60zM128 200h58v1h-58zM130 201h54v1h-54zM132 202h50v1h-50zM133 203h48v1h-48zM136 204h42v1h-42zM138 205h38v1h-38zM141 206h32v1h-32zM144 207h26v1h-26zM149 208h16v1h-16z"/>
<path fill="#3030ff" d="M148 108h18v1h-18zM144 109h26v1h-26zM141 110h32v1h-32zM138 111h38v1h-38zM136 112h42v1h-42zM134 113h46v1h-46zM132 114h50v1h-50zM130 115h54v1h-54zM129 116h56v1h-56zM127 117h60v1h-60zM126 118h62v1h-62zM125 119h64v1h-64zM124 120h66v1h-66zM123 121h68v1h-68zM122 122h70v1h-70zM121 123h72v1h-72zM120 124h74v1h-74zM119 125h76v1h-76zM118 126h78v1h-78zM117 127h80v2h-80zM116 129h82v1h-82zM115 130h84v2h-84zM114 132h86v2h-86zM113 134h88v2h-88zM112 136h90v2h-90zM111 138h92v3h-92zM110 141h94v3h-94zM109 144h96v4h-96zM108 148h98v18h-98zM109 166h96v4h-96zM110 170h94v3h-94zM111 173h92v3h-92zM112 176h90v2h-90zM113 178h88v2h-88zM114 180h86v2h-86zM115 182h84v2h-84zM116 184h82v1h-82zM117 185h80v2h-80zM118 187h78v1h-78zM119 188h76v1h-76zM120 189h74v1h-74zM121 190h72v1h-72zM122 191h70v1h-70zM123 192h68v1h-68zM124 193h66v1h-66zM125 194h64v1h-64zM126 195h62v1h-62zM127 196h60v1h-60zM129 197h56v1h-56zM130 198h54v1h-54zM132 199h50v1h-50zM134 200h46v1h-46zM136 201h42v1h-42zM138 202h38v1h-38zM141 203h32v1h-32zM144 204h26v1h-26zM148 205h18v1h-18z"/>
<path fill="#32327a" d="M151 111h12v1h-12zM146 112h22v1h-22zM143 113h28v1h-28zM140 114h34v1h-34zM138 115h38v1h-38zM136 116h42v1h-42zM134 117h46v1h-46zM132 118h50v1h-50zM131 119h52v1h-52zM129 120h56v1h-56zM128 121h58v1h-58zM127 122h60v1h-60zM126 123h62v1h-62zM125 124h64v1h-64zM124 125h66v1h-66zM123 126h68v1h-68zM122 127h70v1h-70zM121 128h72v1h-72zM120 129h74v2h-74zM119 131h76v1h-76zM118 132h78v2h-78zM117 134h80v2h-80zM116 136h82v2h-82zM115 138h84v2h-84zM114 140h86v3h-86zM113 143h88v3h-88zM112 146h90v5h-90zM111 151h92v12h-92zM112 163h90v5h-90zM113 168h88v3h-88zM114 171h86v3h-86zM115 174h84v2h-84zM116 176h82v2h-82zM117 178h80v2h-80zM118 180h78v2h-78zM119 182h76v1h-76zM120 183h74v2h-74zM121 185h72v1h-72zM122 186h70v1h-70zM123 187h68v1h-68zM124 188h66v1h-66zM125 189h64v1h-64zM126 190h62v1h-62zM127 191h60v1h-60zM128 192h58v1h-58zM129 193h56v1h-56zM131 194h52v1h-52zM132 195h50v1h-50zM134 196h46v1h-46zM136 197h42v1h-42zM138 198h38v1h-38zM140 199h34v1h-34zM143 200h28v1h-28zM146 201h22v1h-22zM151 202h12v1h-12z"/>
<path fill="#323232" d="M152 114h10v1h-10zM146 115h22v1h-22zM143 116h28v1h-28zM140 117h34v1h-34zM138 118h38v1h-38zM136 119h42v1h-42zM135 120h44v1h-44zM133 121h48v1h-48zM132 122h50v1h-50zM130 123h54v1h-54zM129 124h56v1h-56zM128 125h58v1h-58zM127 126h60v1h-60zM126 127h62v1h-62zM125 128h64v1h-64zM124 129h66v1h-66zM123 130h68v2h-68zM122 132h70v1h-70zM121 133h72v2h-72zM120 135h74v1h-74zM119 136h76v2h-76zM118 138h78v2h-78zM117 140h80v3h-80zM116 143h82v3h-82zM115 146h84v6h-84zM114 152h86v10h-86zM115 162h84v6h-84zM116 168h82v3h-82zM117 171h80v3h-80zM118 174h78v2h-78zM119 176h76v2h-76zM120 178h74v1h-74zM121 179h72v2h-72zM122 181h70v1h-70zM123 182h68v2h-68zM124 184h66v1h-66zM125 185h64v1h-64zM126 186h62v1h-62zM127 187h60v1h-60zM128 188h58v1h-58zM129 189h56v1h-56zM130 190h54v1h-54zM132 191h50v1h-50zM133 192h48v1h-48zM135 193h44v1h-44zM136 194h42v1h-42zM138 195h38v1h-38zM140 196h34v1h-34zM143 197h28v1h-28zM146 198h22v1h-22zM152 199h10v1h-10z"/>
</svg>
<svg class="grid" width="939" height="939" viewBox="0 0 939 939" shape-rendering="crispEdges">
<g fill="#6e6a84"><rect x="94" y="0" width="3" height="939"/><rect x="0" y="94" width="939" height="3"/><rect x="188" y="0" width="3" height="939"/><rect x="0" y="188" width="939" height="3"/><rect x="282" y="0" width="3" height="939"/><rect x="0" y="282" width="939" height="3"/><rect x="376" y="0" width="3" height="939"/><rect x="0" y="376" width="939" height="3"/><rect x="469" y="0" width="4" height="939"/><rect x="0" y="469" width="939" height="4"/><rect x="563" y="0" width="4" height="939"/><rect x="0" y="563" width="939" height="4"/><rect x="657" y="0" width="3" height="939"/><rect x="0" y="657" width="939" height="3"/><rect x="751" y="0" width="3" height="939"/><rect x="0" y="751" width="939" height="3"/><rect x="845" y="0" width="3" height="939"/><rect x="0" y="845" width="939" height="3"/></g>
</svg>

<!-- legend -->
<div id="lgf"></div>
<div class="lg" style="top:197px"><i style="background:#ff3000"></i></div>
<div class="lg" style="top:257px"><i style="background:#ff6a14"></i></div>
<div class="lg" style="top:317px"><i style="background:#de8c00"></i></div>
<div class="lg" style="top:377px"><i style="background:#dcc800"></i></div>
<div class="lg" style="top:437px"><i style="background:#c8bc00"></i></div>
<div class="lg" style="top:497px"><i style="background:#90fafc"></i></div>
<div class="lg" style="top:557px"><i style="background:#3080ff"></i></div>
<div class="lg" style="top:617px"><i style="background:#3030ff"></i></div>
<div class="lg" style="top:677px"><i style="background:#32327a"></i></div>
<div class="lg" style="top:737px"><i style="background:#323232"></i></div>
<div class="t" id="p100" style="left:7px;top:191px;letter-spacing:0.35px">%100</div>
<div class="t" id="p50" style="left:18px;top:485px;letter-spacing:0.3px">%50</div>
<div class="t" id="p10" style="left:13px;top:727px;letter-spacing:0.4px">%10</div>
<div class="rot" id="ol1" style="left:28.5px;top:432px;letter-spacing:0.06px">Output Level (%)</div>
<div class="rot" id="ol2" style="left:28.5px;top:689px;letter-spacing:0.1px">Output Level (%)</div>
</body></html>
